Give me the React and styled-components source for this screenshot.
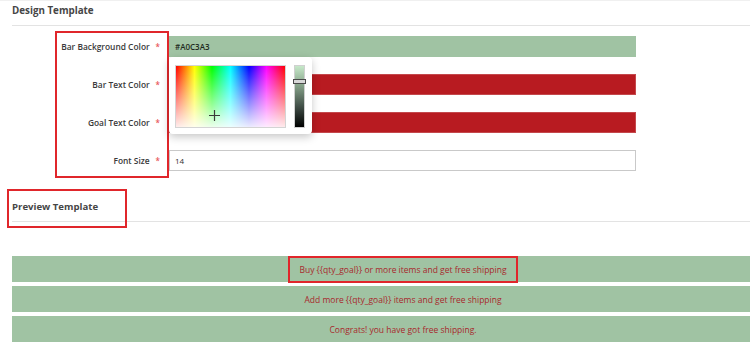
import styled, { createGlobalStyle } from "styled-components";

const GlobalStyle = createGlobalStyle`
    html, body {
        margin: 0;
        padding: 0;
        background: #ffffff;
        overflow: hidden;
    }
    body {
        font-family: "Open Sans", "Liberation Sans", sans-serif;
        color: #303030;
    }
`;

const fields = [
    { label: "Bar Background Color", value: "#A0C3A3", tone: "green" },
    { label: "Bar Text Color", value: "", tone: "red" },
    { label: "Goal Text Color", value: "", tone: "red" },
    { label: "Font Size", value: "14", tone: "plain" },
];

const previews = [
    "Buy {{qty_goal}} or more items and get free shipping",
    "Add more {{qty_goal}} items and get free shipping",
    "Congrats! you have got free shipping.",
];

function ColorPicker() {
    return (
        <Picker>
            <Spectrum>
                <Cross width="11" height="11" viewBox="0 0 11 11">
                    <path d="M5.5 0V11M0 5.5H11" stroke="#3a3a3a" strokeWidth="1.2" />
                </Cross>
            </Spectrum>
            <Slider>
                <Handle />
            </Slider>
        </Picker>
    );
}

function App() {
    return (
        <Page>
            <GlobalStyle />
            <SectionTitle>Design Template</SectionTitle>

            <Form>
                <LabelColumn>
                    {fields.map((f) => (
                        <LabelRow key={f.label}>
                            {f.label}
                            <Required>*</Required>
                        </LabelRow>
                    ))}
                </LabelColumn>
                <FieldColumn>
                    {fields.map((f) => (
                        <Input key={f.label} $tone={f.tone}>{f.value}</Input>
                    ))}
                    <ColorPicker />
                </FieldColumn>
            </Form>

            <PreviewTitle>Preview Template</PreviewTitle>

            <PreviewList>
                {previews.map((text, i) => (
                    <PreviewBar key={text}>
                        {i === 0 ? <Highlight>{text}</Highlight> : text}
                    </PreviewBar>
                ))}
            </PreviewList>
        </Page>
    );
}

export default App;

const Page = styled.div`
    width: 750px;
    height: 347px;
    overflow: hidden;
    border-top: 1px solid #f0f0f0;
    box-sizing: border-box;
`;

const SectionTitle = styled.div`
    margin-left: 12px;
    height: 24px;
    line-height: 19px;
    font-size: 9.8px;
    font-weight: 700;
    color: #464646;
    border-bottom: 1px solid #e3e3e3;
`;

const Form = styled.div`
    display: flex;
    margin: 5px 0 0 55px;
`;

const LabelColumn = styled.div`
    width: 114px;
    flex-shrink: 0;
    box-sizing: border-box;
    border: 2px solid #e0262b;
    padding: 3px 7px 5px 0;
    display: flex;
    flex-direction: column;
    gap: 17px;
`;

const LabelRow = styled.div`
    height: 21px;
    display: flex;
    align-items: center;
    justify-content: flex-end;
    white-space: nowrap;
    font-size: 8.4px;
    font-weight: 600;
    color: #3a3a3a;
`;

const Required = styled.span`
    color: #e8585b;
    font-size: 8px;
    margin-left: 6px;
`;

const FieldColumn = styled.div`
    position: relative;
    width: 467px;
    padding-top: 5px;
    display: flex;
    flex-direction: column;
    gap: 17px;
`;

const Input = styled.div`
    height: 21px;
    box-sizing: border-box;
    padding-left: 5px;
    display: flex;
    align-items: center;
    font-size: 8px;
    font-weight: ${(p) => (p.$tone === "plain" ? 400 : 600)};
    color: ${(p) => (p.$tone === "plain" ? "#303030" : "#1e2a20")};
    background: ${(p) =>
        p.$tone === "green" ? "#a0c3a3" : p.$tone === "red" ? "#b81b21" : "#ffffff"};
    border: 1px solid ${(p) =>
        p.$tone === "green" ? "#a0c3a3" : p.$tone === "red" ? "#c4484c" : "#c9c9c9"};
`;

const Picker = styled.div`
    position: absolute;
    left: 0;
    top: 26px;
    width: 143px;
    height: 77px;
    box-sizing: border-box;
    padding: 8px 7px 6px 6px;
    display: flex;
    gap: 8px;
    background: #ffffff;
    border-radius: 4px;
    box-shadow: 0 3px 9px rgba(0, 0, 0, 0.22);
`;

const Spectrum = styled.div`
    position: relative;
    width: 111px;
    height: 63px;
    box-sizing: border-box;
    border: 1px solid #d4d4d4;
    background:
        linear-gradient(to bottom, rgba(255, 255, 255, 0) 0%, rgba(255, 255, 255, 0.92) 100%),
        linear-gradient(to right, #ff0000 0%, #ffff00 17%, #00ff00 33%, #00ffff 50%, #0000ff 67%, #ff00ff 83%, #ff0000 100%);
`;

const Cross = styled.svg`
    position: absolute;
    left: 33px;
    top: 44px;
`;

const Slider = styled.div`
    position: relative;
    width: 11px;
    height: 63px;
    box-sizing: border-box;
    border: 1px solid #d0d0d0;
    background: linear-gradient(to bottom, #c6e8c9 0%, #8aa78d 30%, #44524a 65%, #000000 100%);
`;

const Handle = styled.div`
    position: absolute;
    left: -2px;
    right: -2px;
    top: 13px;
    height: 5px;
    box-sizing: border-box;
    border: 1px solid #4a4a4a;
    background: #d8d8d8;
`;

const PreviewTitle = styled.div`
    position: relative;
    margin: 11px 0 0 12px;
    height: 33px;
    box-sizing: border-box;
    padding-top: 11px;
    line-height: 14px;
    font-size: 9.6px;
    font-weight: 700;
    color: #464646;
    border-bottom: 1px solid #e3e3e3;

    &::before {
        content: "";
        position: absolute;
        left: -5px;
        top: 0;
        width: 120px;
        height: 39px;
        box-sizing: border-box;
        border: 2px solid #e0262b;
    }
`;

const PreviewList = styled.div`
    margin: 34px 0 0 12px;
    width: 782px;
    display: flex;
    flex-direction: column;
    gap: 4px;
`;

const PreviewBar = styled.div`
    height: 26px;
    display: flex;
    align-items: center;
    justify-content: center;
    background: #a0c3a3;
    color: #a8282d;
    font-size: 8.5px;
`;

const Highlight = styled.span`
    align-self: flex-start;
    height: 27px;
    box-sizing: border-box;
    padding: 0 9px;
    display: flex;
    align-items: center;
    border: 2px solid #e0262b;
`;
